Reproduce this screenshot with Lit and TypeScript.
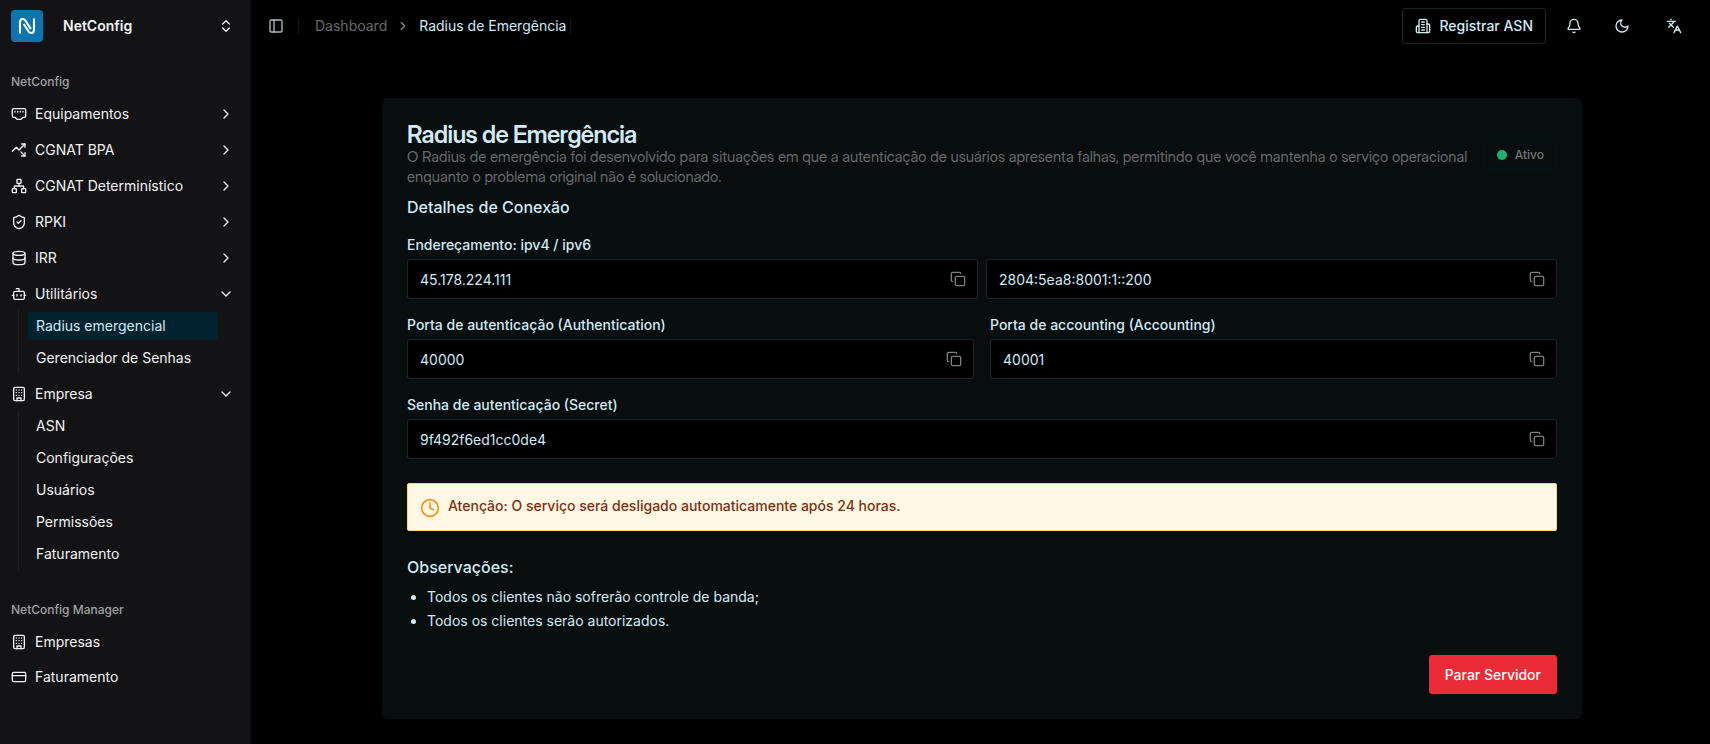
import { LitElement, html, css, svg, nothing } from "lit";
import { customElement, property } from "lit/decorators.js";

const ICONS: Record<string, unknown> = {
  ethernet: svg`<path d="m15 20 3-3h2a2 2 0 0 0 2-2V6a2 2 0 0 0-2-2H4a2 2 0 0 0-2 2v9a2 2 0 0 0 2 2h2l3 3z"/><path d="M6 8v1M10 8v1M14 8v1M18 8v1"/>`,
  trending: svg`<path d="M14.828 14.828 21 21"/><path d="M21 16v5h-5"/><path d="m21 3-9 9-4-4-6 6"/><path d="M21 8V3h-5"/>`,
  network: svg`<rect x="16" y="16" width="6" height="6" rx="1"/><rect x="2" y="16" width="6" height="6" rx="1"/><rect x="9" y="2" width="6" height="6" rx="1"/><path d="M5 16v-3a1 1 0 0 1 1-1h12a1 1 0 0 1 1 1v3M12 12V8"/>`,
  shield: svg`<path d="M20 13c0 5-3.5 7.5-7.66 8.95a1 1 0 0 1-.67-.01C7.5 20.5 4 18 4 13V6a1 1 0 0 1 1-1c2 0 4.5-1.2 6.24-2.72a1.17 1.17 0 0 1 1.52 0C14.51 3.81 17 5 19 5a1 1 0 0 1 1 1z"/><path d="m9 12 2 2 4-4"/>`,
  database: svg`<ellipse cx="12" cy="5" rx="9" ry="3"/><path d="M3 5V19A9 3 0 0 0 21 19V5"/><path d="M3 12A9 3 0 0 0 21 12"/>`,
  bot: svg`<path d="M12 8V4H8"/><rect width="16" height="12" x="4" y="8" rx="2"/><path d="M2 14h2M20 14h2M15 13v2M9 13v2"/>`,
  building: svg`<rect width="16" height="20" x="4" y="2" rx="2"/><path d="M9 22v-4h6v4M8 6h.01M16 6h.01M12 6h.01M12 10h.01M12 14h.01M16 10h.01M16 14h.01M8 10h.01M8 14h.01"/>`,
  building2: svg`<path d="M6 22V4a2 2 0 0 1 2-2h8a2 2 0 0 1 2 2v18Z"/><path d="M6 12H4a2 2 0 0 0-2 2v6a2 2 0 0 0 2 2h2"/><path d="M18 9h2a2 2 0 0 1 2 2v9a2 2 0 0 1-2 2h-2"/><path d="M10 6h4M10 10h4M10 14h4M10 18h4"/>`,
  card: svg`<rect width="20" height="14" x="2" y="5" rx="2"/><path d="M2 10h20"/>`,
  panel: svg`<rect width="18" height="18" x="3" y="3" rx="2"/><path d="M9 3v18"/>`,
  sort: svg`<path d="m7 15 5 5 5-5"/><path d="m7 9 5-5 5 5"/>`,
  right: svg`<path d="m9 18 6-6-6-6"/>`,
  down: svg`<path d="m6 9 6 6 6-6"/>`,
  bell: svg`<path d="M10.268 21a2 2 0 0 0 3.464 0"/><path d="M3.262 15.326A1 1 0 0 0 4 17h16a1 1 0 0 0 .74-1.673C19.41 13.956 18 12.499 18 8A6 6 0 0 0 6 8c0 4.499-1.411 5.956-2.738 7.326"/>`,
  moon: svg`<path d="M12 3a6 6 0 0 0 9 9 9 9 0 1 1-9-9Z"/>`,
  languages: svg`<path d="m5 8 6 6M4 14l6-6 2-3M2 5h12M7 2h1M22 22l-5-10-5 10M14 18h6"/>`,
  copy: svg`<rect width="14" height="14" x="8" y="8" rx="2"/><path d="M4 16c-1.1 0-2-.9-2-2V4c0-1.1.9-2 2-2h10c1.1 0 2 .9 2 2"/>`,
  clock: svg`<circle cx="12" cy="12" r="10"/><path d="M12 6v6l4 2"/>`,
};

const icon = (name: string, cls = "icon") => html`
  <svg class=${cls} viewBox="0 0 24 24" fill="none" stroke="currentColor" stroke-width="2"
    stroke-linecap="round" stroke-linejoin="round" aria-hidden="true">${ICONS[name]}</svg>`;

const base = css`
  *, *::before, *::after { box-sizing: border-box; }
  h1, h2, p, ul { margin: 0; padding: 0; }
  button, input { font: inherit; color: inherit; background: none; border: 0; margin: 0; padding: 0; }
  button { cursor: pointer; }
  a { color: inherit; text-decoration: none; }
  .icon { width: 16px; height: 16px; flex: none; display: block; }
`;

interface NavItem {
  icon: string;
  label: string;
  leaf?: boolean;
  children?: string[];
}

const MAIN_NAV: NavItem[] = [
  { icon: "ethernet", label: "Equipamentos" },
  { icon: "trending", label: "CGNAT BPA" },
  { icon: "network", label: "CGNAT Determinístico" },
  { icon: "shield", label: "RPKI" },
  { icon: "database", label: "IRR" },
  { icon: "bot", label: "Utilitários", children: ["Radius emergencial", "Gerenciador de Senhas"] },
  { icon: "building", label: "Empresa", children: ["ASN", "Configurações", "Usuários", "Permissões", "Faturamento"] },
];

const MANAGER_NAV: NavItem[] = [
  { icon: "building", label: "Empresas", leaf: true },
  { icon: "card", label: "Faturamento", leaf: true },
];

@customElement("app-sidebar")
export class AppSidebar extends LitElement {
  static styles = [base, css`
    :host {
      display: block; width: 251px; flex: none;
      background: #131316; color: #f4f4f5; border-right: 1px solid #00141c;
    }
    .team {
      display: flex; align-items: center; width: 100%; height: 52px;
      padding: 0 16px 0 11px; font-weight: 600; text-align: left;
    }
    .logo { width: 32px; height: 32px; flex: none; }
    .name { flex: 1; padding-left: 20px; }
    .group { padding: 14px 16px 10px 11px; }
    .title { height: 32px; font-size: 12px; line-height: 32px; font-weight: 500; color: #a1a1a3; }
    .list { list-style: none; display: flex; flex-direction: column; gap: 4px; }
    .compact { gap: 3px; }
    .row { display: flex; align-items: center; gap: 8px; width: 100%; height: 32px; text-align: left; }
    .label { flex: 1; }
    .sub {
      list-style: none; display: flex; flex-direction: column; gap: 4px;
      margin: 0 16px 0 7px; padding: 2px 0 2px 9px; border-left: 1px solid #202024;
    }
    .link { display: block; height: 28px; line-height: 28px; padding: 0 8px; border-radius: 3px; }
    .active { background: #002330; color: #d2ebf7; }
  `];

  private item(n: NavItem) {
    if (n.leaf) {
      return html`<li><a class="row" href="#">${icon(n.icon)}<span class="label">${n.label}</span></a></li>`;
    }
    return html`<li>
      <button class="row" aria-expanded=${n.children ? "true" : "false"}>
        ${icon(n.icon)}<span class="label">${n.label}</span>${icon(n.children ? "down" : "right")}
      </button>
      ${n.children
        ? html`<ul class="sub">${n.children.map((c) => html`
            <li><a class="link ${c === "Radius emergencial" ? "active" : ""}" href="#">${c}</a></li>`)}</ul>`
        : nothing}
    </li>`;
  }

  render() {
    return html`
      <button class="team">
        <svg class="logo" viewBox="0 0 32 32" aria-hidden="true">
          <rect width="32" height="32" rx="4" fill="#0e74ae"/>
          <path d="M9 23.500V12.500C9 8.600 12.700 7.800 14.800 11L19.800 19M12.800 14L17.400 21.200C19.400 24.200 23 23.300 23 19.800V8.500"
            fill="none" stroke="#fff" stroke-width="2.100" stroke-linejoin="round"/>
        </svg>
        <span class="name">NetConfig</span>
        ${icon("sort")}
      </button>
      <nav class="group" aria-label="NetConfig">
        <div class="title">NetConfig</div>
        <ul class="list">${MAIN_NAV.map((n) => this.item(n))}</ul>
      </nav>
      <nav class="group" aria-label="NetConfig Manager">
        <div class="title">NetConfig Manager</div>
        <ul class="list compact">${MANAGER_NAV.map((n) => this.item(n))}</ul>
      </nav>`;
  }
}

@customElement("app-topbar")
export class AppTopbar extends LitElement {
  static styles = [base, css`
    :host { display: flex; align-items: center; justify-content: space-between; height: 52px; padding: 0 14px; }
    .side { display: flex; align-items: center; }
    .crumbs { display: flex; align-items: center; gap: 9px; padding: 0 4px 0 16px; }
    .muted { color: #666b6e; }
    .small { width: 14px; height: 14px; display: block; color: #888d90; }
    .sep { width: 1px; height: 16px; background: #00202b; }
    .toggle { margin-right: 14px; color: #a9bbc4; }
    .register {
      display: flex; align-items: center; gap: 8px; height: 36px; padding: 0 12px;
      border: 1px solid #1d272b; border-radius: 3px; font-weight: 500;
    }
    .tool { display: grid; place-items: center; width: 36px; height: 36px; }
    .tools { display: flex; gap: 12px; padding-left: 10px; }
    .lang { width: 44px; }
  `];

  render() {
    return html`
      <div class="side">
        <button class="toggle" aria-label="Alternar menu">${icon("panel")}</button>
        <span class="sep"></span>
        <nav class="crumbs" aria-label="Trilha">
          <a class="muted" href="#">Dashboard</a>
          ${icon("right", "small")}
          <span>Radius de Emergência</span>
        </nav>
        <span class="sep"></span>
      </div>
      <div class="side">
        <button class="register">${icon("building2")}<span>Registrar ASN</span></button>
        <div class="tools">
          <button class="tool" aria-label="Notificações">${icon("bell")}</button>
          <button class="tool" aria-label="Tema">${icon("moon")}</button>
          <button class="tool lang" aria-label="Idioma">${icon("languages")}</button>
        </div>
      </div>`;
  }
}

@customElement("copy-field")
export class CopyField extends LitElement {
  @property() label = "";
  @property() name = "";
  @property() value = "";

  static styles = [base, css`
    :host { display: flex; flex-direction: column; gap: 4px; min-width: 0; }
    .label { font-weight: 500; line-height: 20px; }
    .box {
      display: flex; align-items: center; height: 40px; padding: 0 11px 0 12px;
      background: #000; border: 1px solid #1d2529; border-radius: 3px;
    }
    .input { flex: 1; min-width: 0; height: 100%; outline: none; padding-top: 1px; }
    .copy { color: #7b7d7e; }
  `];

  render() {
    return html`
      ${this.label ? html`<label class="label" for="field">${this.label}</label>` : nothing}
      <div class="box">
        <input class="input" id="field" readonly .value=${this.value} aria-label=${this.label || this.name}>
        <button class="copy" aria-label="Copiar">${icon("copy")}</button>
      </div>`;
  }
}

@customElement("app-root")
export class AppRoot extends LitElement {
  static styles = [base, css`
    :host {
      display: flex; min-height: 100vh; background: #000; color: #d2ebf7;
      font-family: Inter, "Liberation Sans", sans-serif; font-size: 14px; line-height: 20px;
    }
    .main { flex: 1; min-width: 0; padding-left: 3px; }
    .content { padding: 46px 24px 24px; }
    .card {
      max-width: 1200px; margin: 0 auto; padding: 24px;
      background: #080d0e; border: 1px solid #001218; border-radius: 5px;
    }
    .head {
      display: flex; align-items: center; justify-content: space-between; gap: 12px;
      font-family: "Inter Display", Inter, sans-serif;
    }
    .title { font-size: 24px; line-height: 24px; font-weight: 600; letter-spacing: -0.025em; }
    .lead { font-size: 15px; color: #666a6b; }
    .badge {
      display: flex; align-items: center; gap: 8px; flex: none; height: 30px; padding: 0 12px;
      border: 1px solid #00161d; border-radius: 3px; color: #747879;
      font-family: Inter, sans-serif; font-size: 12px; font-weight: 500;
    }
    .dot { width: 10px; height: 10px; border-radius: 50%; background: #1cb373; }
    .subtitle { font-size: 16px; line-height: 24px; font-weight: 500; margin-top: 8px; }
    .fields { display: flex; flex-direction: column; gap: 16px; margin-top: 16px; }
    .pair { display: grid; grid-template-columns: 1fr 1fr; gap: 16px; align-items: end; }
    .tight { gap: 8px; }
    .alert {
      display: flex; align-items: flex-start; gap: 8px; margin: 24px 0; padding: 12px;
      background: #fff8e4; border: 1px solid #fbdc6e; border-radius: 2px; color: #7b3111; font-weight: 500;
    }
    .clock { width: 20px; height: 20px; margin-top: 2px; flex: none; color: #f39019; }
    .notes { display: flex; flex-direction: column; gap: 4px; margin-top: 8px; padding-left: 20px; }
    .actions { display: flex; justify-content: flex-end; margin-top: 24px; }
    .stop { height: 39px; padding: 0 16px; border-radius: 3px; background: #e92c36; color: #fafafa; font-weight: 500; }
  `];

  render() {
    return html`
      <app-sidebar></app-sidebar>
      <div class="main">
        <app-topbar></app-topbar>
        <main class="content">
          <section class="card">
            <div class="head">
              <div>
                <h1 class="title">Radius de Emergência</h1>
                <p class="lead">O Radius de emergência foi desenvolvido para situações em que a autenticação de usuários apresenta falhas, permitindo que você mantenha o serviço operacional enquanto o problema original não é solucionado.</p>
              </div>
              <div class="badge"><span class="dot"></span>Ativo</div>
            </div>
            <h2 class="subtitle">Detalhes de Conexão</h2>
            <div class="fields">
              <div class="pair tight">
                <copy-field label="Endereçamento: ipv4 / ipv6" value="45.178.224.111"></copy-field>
                <copy-field name="ipv6" value="2804:5ea8:8001:1::200"></copy-field>
              </div>
              <div class="pair">
                <copy-field label="Porta de autenticação (Authentication)" value="40000"></copy-field>
                <copy-field label="Porta de accounting (Accounting)" value="40001"></copy-field>
              </div>
              <copy-field label="Senha de autenticação (Secret)" value="9f492f6ed1cc0de4"></copy-field>
            </div>
            <div class="alert" role="alert">
              ${icon("clock", "clock")}
              <span>Atenção: O serviço será desligado automaticamente após 24 horas.</span>
            </div>
            <h2 class="subtitle">Observações:</h2>
            <ul class="notes">
              <li>Todos os clientes não sofrerão controle de banda;</li>
              <li>Todos os clientes serão autorizados.</li>
            </ul>
            <div class="actions"><button class="stop">Parar Servidor</button></div>
          </section>
        </main>
      </div>`;
  }
}
